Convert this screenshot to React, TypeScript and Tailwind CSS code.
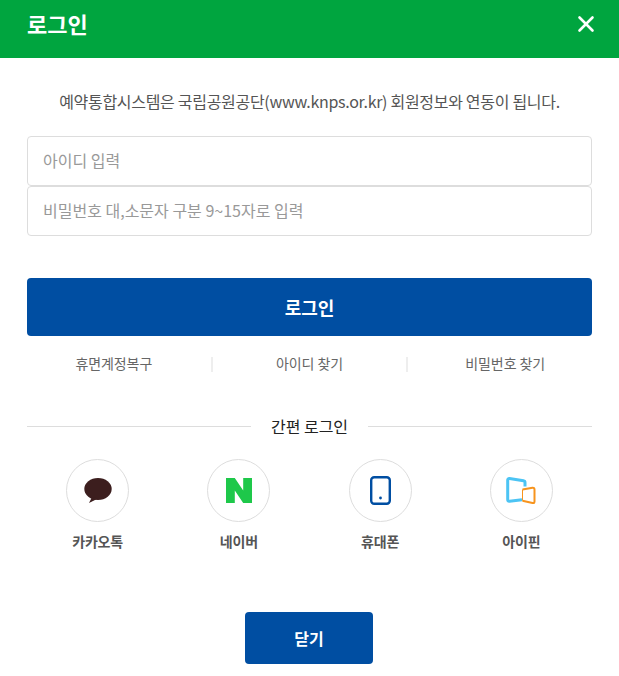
import { X } from "lucide-react";

const font = "font-['Noto_Sans_CJK_KR','Noto_Sans',sans-serif]";

function KakaoIcon() {
  return (
    <svg width="28" height="25" viewBox="0 0 28 25">
      <ellipse cx="14" cy="11" rx="13.7" ry="11" fill="#3c1e1e" />
      <path d="M8 19 L5 25 L14 20.5 Z" fill="#3c1e1e" />
    </svg>
  );
}

function NaverIcon() {
  return (
    <svg width="26" height="25" viewBox="0 0 26 25">
      <path d="M0 0H8.8L17.2 12.5V0H26V25H17.2L8.8 12.5V25H0Z" fill="#1ec84a" />
    </svg>
  );
}

function PhoneIcon() {
  return (
    <svg width="21" height="29" viewBox="0 0 21 29">
      <rect x="1.2" y="1.2" width="18.6" height="26.6" rx="3" fill="none" stroke="#004ea2" strokeWidth="2.4" />
      <circle cx="10.5" cy="22" r="1.4" fill="#004ea2" />
    </svg>
  );
}

function IpinIcon() {
  return (
    <svg width="30" height="27" viewBox="0 0 30 27">
      <path d="M16.5 12.5 L26.5 10.8 Q28.5 10.6 28.5 12.5 V24.5 Q28.5 26.4 26.5 26 L16.5 23.7" fill="none" stroke="#f7941e" strokeWidth="2" />
      <path d="M16.5 12.5 V23.7" fill="none" stroke="#f7941e" strokeWidth="1" />
      <path d="M19 9.5 V5.5 Q19 4 17.5 3.7 L3.5 1.6 Q1.7 1.4 1.7 3 V22.5 Q1.7 24.6 3.5 24.3 L16 22.8" fill="none" stroke="#4cc4f4" strokeWidth="3" />
    </svg>
  );
}

const easy = [
  { label: "카카오톡", icon: <KakaoIcon /> },
  { label: "네이버", icon: <NaverIcon /> },
  { label: "휴대폰", icon: <PhoneIcon /> },
  { label: "아이핀", icon: <IpinIcon /> },
];

export default function App() {
  return (
    <div className={`${font} h-[676px] w-[619px] overflow-hidden bg-white`}>
      <header className="flex h-[58px] items-center justify-between bg-[#00a53f] pb-[11px] pl-[27px] pr-[20px]">
        <h1 className="mb-[2px] text-[22px] font-bold leading-[30px] text-white">로그인</h1>
        <X className="h-[26px] w-[26px] text-white" strokeWidth={2.4} />
      </header>

      <div className="px-[27px]">
        <p className="mt-[32px] whitespace-nowrap text-center text-[16px] leading-[22px] tracking-[-0.3px] text-[#555]">
          예약통합시스템은 국립공원공단(www.knps.or.kr) 회원정보와 연동이 됩니다.
        </p>

        <div className="mt-[24px] flex flex-col">
          <input
            placeholder="아이디 입력"
            className="h-[50px] w-full rounded-[4px] border border-[#ddd] px-[15px] pb-[2px] text-[16px] outline-none placeholder:text-[#999]"
          />
          <input
            placeholder="비밀번호 대,소문자 구분 9~15자로 입력"
            className="h-[50px] w-full rounded-[4px] border border-[#ddd] px-[15px] pb-[2px] text-[16px] outline-none placeholder:text-[#999]"
          />
        </div>

        <button className="mt-[42px] h-[58px] w-full rounded-[4px] bg-[#004ea2] text-[18px] font-bold text-white">
          로그인
        </button>

        <div className="-mx-[10px] mt-[17px] flex h-[22px] items-center text-[14px] leading-[20px] tracking-[-0.1px] text-[#666]">
          <a className="flex-1 pb-[2px] text-center">휴면계정복구</a>
          <div className="h-[15px] w-[2px] bg-[#eee]" />
          <a className="flex-1 pb-[2px] text-center">아이디 찾기</a>
          <div className="h-[15px] w-[2px] bg-[#eee]" />
          <a className="flex-1 pb-[2px] text-center">비밀번호 찾기</a>
        </div>

        <div className="mt-[40px] flex items-center">
          <div className="h-px flex-1 bg-[#ddd]" />
          <span className="px-[20px] text-[16px] leading-[22px] text-[#222]">간편 로그인</span>
          <div className="h-px flex-1 bg-[#ddd]" />
        </div>

        <div className="mt-[22px] grid grid-cols-4">
          {easy.map((item) => (
            <div key={item.label} className="flex flex-col items-center">
              <div className="flex h-[63px] w-[63px] items-center justify-center rounded-full border border-[#ddd]">
                {item.icon}
              </div>
              <span className="mt-[9px] text-[14px] font-bold leading-[20px] tracking-[-0.2px] text-[#555]">{item.label}</span>
            </div>
          ))}
        </div>

        <div className="mt-[61px] flex justify-center">
          <button className="mr-[1px] h-[52px] w-[128px] rounded-[4px] bg-[#004ea2] text-[16px] font-bold text-white">
            닫기
          </button>
        </div>
      </div>
    </div>
  );
}
